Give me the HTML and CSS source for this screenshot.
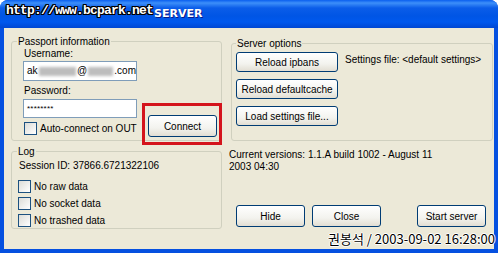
FILE: index.html
```html
<!DOCTYPE html>
<html lang="en">
<head>
  <meta charset="UTF-8">
  <title>OUT Passport Server</title>
  <link rel="stylesheet" href="styles.css">
</head>
<body>
  <div class="window">
    <div class="titlebar">
      <span class="title">SERVER</span>
    </div>
    <div class="client">
      <div class="col-left">
        <fieldset class="group passport">
          <legend>Passport information</legend>
          <div class="passport-body">
            <div class="fields">
              <div class="label">Username:</div>
              <div class="input user">ak<span class="smudge w-long"></span>@<span class="smudge w-short"></span>.com</div>
              <div class="label pw-label">Password:</div>
              <div class="input pw">********</div>
              <div class="check first"><span class="box"></span>Auto-connect on OUT</div>
            </div>
            <div class="connect-col">
              <button class="btn connect">Connect</button>
            </div>
          </div>
        </fieldset>

        <fieldset class="group log">
          <legend>Log</legend>
          <div class="session">Session ID: 37866.6721322106</div>
          <div class="check-list">
            <div class="check"><span class="box"></span>No raw data</div>
            <div class="check"><span class="box"></span>No socket data</div>
            <div class="check"><span class="box"></span>No trashed data</div>
          </div>
        </fieldset>
      </div>

      <div class="col-right">
        <fieldset class="group server">
          <legend>Server options</legend>
          <div class="server-body">
            <div class="btn-stack">
              <button class="btn wide">Reload ipbans</button>
              <button class="btn wide">Reload defaultcache</button>
              <button class="btn wide">Load settings file...</button>
            </div>
            <div class="settings">Settings file: &lt;default settings&gt;</div>
          </div>
        </fieldset>

        <p class="versions">Current versions: 1.1.A build 1002 - August 11<br>2003 04:30</p>

        <div class="actions">
          <button class="btn">Hide</button>
          <button class="btn">Close</button>
          <button class="btn start">Start server</button>
        </div>
      </div>
    </div>

    <!-- annotation + watermarks on top of the screenshot -->
    <div class="highlight"></div>
    <div class="watermark">http://www.bcpark.net</div>
    <div class="stamp">권봉석 / 2003-09-02 16:28:00</div>
  </div>
</body>
</html>
```

FILE: styles.css
```css
* {
  margin: 0;
  padding: 0;
  box-sizing: border-box;
}

body {
  background-color: #fff;
  font-family: "Liberation Sans", Arial, sans-serif;
  font-size: 10px;
  color: #000;
}

.window {
  position: relative;
  width: 498px;
  height: 253px;
  background-color: #0550e0;
  border-radius: 8px 8px 0 0;
  padding: 0 4px 4px;
  display: flex;
  flex-direction: column;
}

.titlebar {
  height: 28px;
  margin: 0 -4px;
  border-radius: 8px 8px 0 0;
  background: linear-gradient(to bottom, #0a5fef 0px, #3d8ff9 3px, #0b5de9 8px, #0055e5 16px, #0058ee 22px, #0047d3 28px);
  padding: 7px 0 0 154px;
}

.title {
  font-family: "DejaVu Sans", sans-serif;
  font-weight: bold;
  font-size: 11px;
  color: #fff;
  text-shadow: 1px 1px 0 #0a1a86;
}

.client {
  flex: 1;
  background-color: #ece9d8;
  display: flex;
  gap: 9px;
  padding: 7px 0 0 7px;
}

.col-left {
  width: 211px;
  display: flex;
  flex-direction: column;
  gap: 4px;
}

.col-right {
  width: 262px;
  display: flex;
  flex-direction: column;
}

.group {
  border: 1px solid #d0d0bf;
  border-radius: 3px;
}

.group legend {
  padding: 0 1px;
  line-height: 13px;
}

/* Passport */
.passport {
  height: 106px;
  padding: 0 0 0 11px;
}

.passport legend {
  margin-left: -6px;
}

.passport-body {
  display: flex;
}

.fields {
  width: 114px;
}

.label {
  line-height: 13px;
  padding-left: 1px;
  margin-top: -1px;
}

.pw-label {
  margin-top: 3px;
}

.input {
  background-color: #fff;
  border: 1px solid #7f9db9;
  height: 20px;
  margin-top: 1px;
  padding-left: 3px;
  line-height: 18px;
  display: flex;
  align-items: center;
}

.input.pw {
  height: 19px;
  margin-top: 2px;
  font-size: 8px;
  letter-spacing: 0.2px;
}

.smudge {
  display: inline-block;
  height: 9px;
  background-color: #bdbdbd;
  filter: blur(1.5px);
  margin: 0 1px;
}

.w-long { width: 40px; }
.w-short { width: 27px; }

.check {
  display: flex;
  align-items: center;
  gap: 3px;
  line-height: 13px;
}

.check.first {
  margin-top: 4px;
  padding-left: 1px;
}

.box {
  width: 13px;
  height: 13px;
  border: 1px solid #1c5180;
  background: linear-gradient(135deg, #dcdcd7, #fff);
}

.connect-col {
  display: flex;
  align-items: flex-end;
  padding-left: 11px;
}

.btn {
  font-family: inherit;
  font-size: 10px;
  color: #000;
  width: 69px;
  height: 22px;
  border: 1px solid #003c74;
  border-radius: 3px;
  background: linear-gradient(to bottom, #fff 0%, #f3f3ee 60%, #e2ded3 100%);
}

.connect {
  margin-bottom: -2px;
}

/* Log */
.log {
  height: 84px;
  padding: 1px 0 0 7px;
}

.log legend {
  margin-left: -2px;
}

.session {
  line-height: 13px;
}

.check-list {
  margin: 8px 0 0 -1px;
  display: flex;
  flex-direction: column;
  gap: 4px;
}

/* Server options */
.server {
  margin-top: 2px;
  height: 104px;
  padding: 2px 0 0 4px;
}

.server-body {
  display: flex;
  gap: 7px;
}

.btn-stack {
  display: flex;
  flex-direction: column;
  gap: 7px;
}

.btn.wide {
  width: 102px;
  height: 20px;
}

.settings {
  line-height: 13px;
  padding-top: 1px;
}

.versions {
  margin: 8px 0 0 -2px;
  line-height: 12px;
}

.actions {
  display: flex;
  gap: 7px;
  margin-top: 32px;
  padding: 0 7px 0 5px;
}

.btn.start {
  margin-left: auto;
}

/* overlays */
.highlight {
  position: absolute;
  left: 142px;
  top: 103px;
  width: 80px;
  height: 42px;
  border: 3px solid #d4141c;
}

.watermark {
  position: absolute;
  left: 6px;
  top: 3px;
  font-family: "Liberation Mono", monospace;
  font-weight: bold;
  font-size: 13px;
  letter-spacing: -0.8px;
  color: #fff;
  text-shadow: 1px 0 0 #000, -1px 0 0 #000, 0 1px 0 #000, 0 -1px 0 #000, 1px 1px 0 #000, -1px -1px 0 #000, 1px -1px 0 #000, -1px 1px 0 #000;
}

.stamp {
  position: absolute;
  right: 3px;
  top: 231px;
  font-family: "Noto Sans CJK KR", sans-serif;
  font-size: 13px;
  line-height: 16px;
  letter-spacing: 0;
  color: #000;
  text-shadow: 1px 0 0 #fff, -1px 0 0 #fff, 0 1px 0 #fff, 0 -1px 0 #fff;
}
```
